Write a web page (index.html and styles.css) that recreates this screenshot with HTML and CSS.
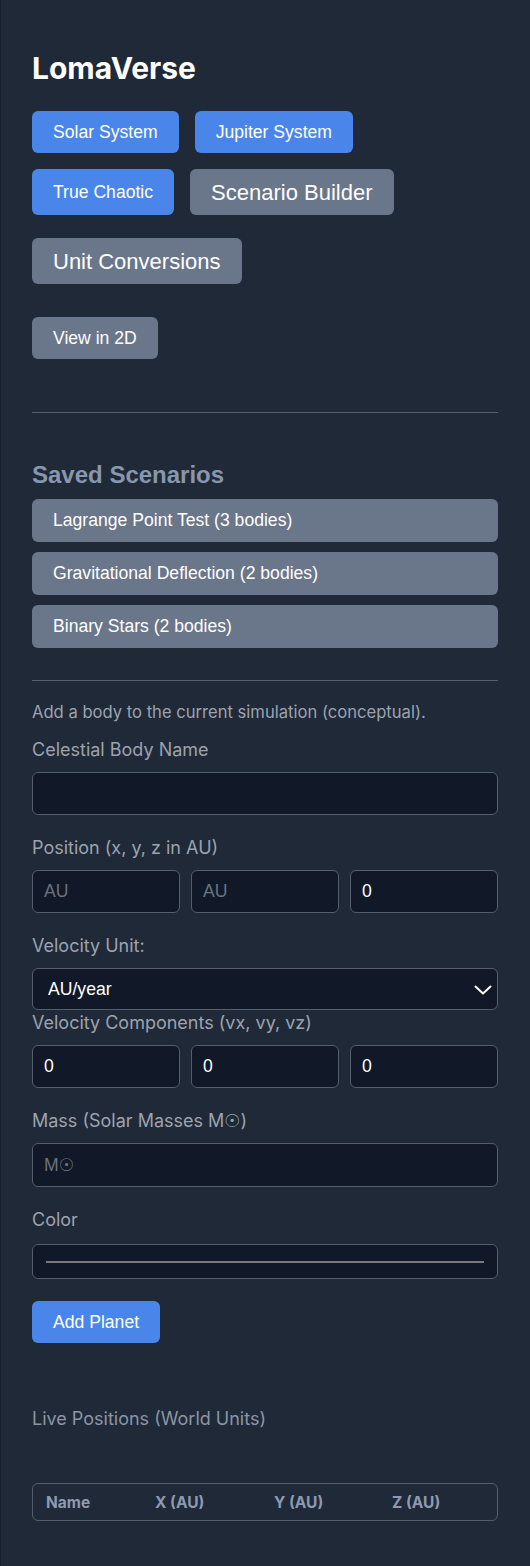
FILE: index.html
```html
<!DOCTYPE html>
<html lang="en">
<head>
<meta charset="utf-8">
<title>LomaVerse</title>
<link rel="stylesheet" href="styles.css">
</head>
<body>
<aside class="panel">
  <h1 class="title">LomaVerse</h1>

  <div class="btn-row">
    <button class="btn btn-blue">Solar System</button>
    <button class="btn btn-blue">Jupiter System</button>
    <button class="btn btn-blue">True Chaotic</button>
    <button class="btn btn-gray btn-lg">Scenario Builder</button>
  </div>
  <div class="btn-single">
    <button class="btn btn-gray btn-lg">Unit Conversions</button>
  </div>
  <div class="btn-single btn-view">
    <button class="btn btn-gray">View in 2D</button>
  </div>

  <div class="divider divider-top"></div>

  <h2 class="section-title">Saved Scenarios</h2>
  <div class="scenario-list">
    <button class="scenario">Lagrange Point Test (3 bodies)</button>
    <button class="scenario">Gravitational Deflection (2 bodies)</button>
    <button class="scenario">Binary Stars (2 bodies)</button>
  </div>

  <div class="divider divider-mid"></div>

  <p class="help">Add a body to the current simulation (conceptual).</p>

  <div class="group">
    <label class="label">Celestial Body Name</label>
    <input class="field" type="text">
  </div>

  <div class="group">
    <label class="label">Position (x, y, z in AU)</label>
    <div class="triple">
      <input class="field" type="text" placeholder="AU">
      <input class="field" type="text" placeholder="AU">
      <input class="field" type="text" value="0">
    </div>
  </div>

  <div class="group group-tight">
    <label class="label">Velocity Unit:</label>
    <div class="select-wrap">
      <select class="field select">
        <option>AU/year</option>
      </select>
      <svg class="chevron" width="18" height="10" viewBox="0 0 18 10"><path d="M1.5 1.5 L9 8.5 L16.5 1.5" fill="none" stroke="#ffffff" stroke-width="2" stroke-linecap="round" stroke-linejoin="round"/></svg>
    </div>
  </div>

  <div class="group">
    <label class="label">Velocity Components (vx, vy, vz)</label>
    <div class="triple">
      <input class="field" type="text" value="0">
      <input class="field" type="text" value="0">
      <input class="field" type="text" value="0">
    </div>
  </div>

  <div class="group">
    <label class="label">Mass (Solar Masses M☉)</label>
    <input class="field field-mass" type="text" placeholder="M☉">
  </div>

  <div class="group">
    <label class="label label-color">Color</label>
    <div class="color-field"><span class="swatch"></span></div>
  </div>

  <button class="btn btn-blue">Add Planet</button>

  <h3 class="live-title">Live Positions (World Units)</h3>

  <div class="table">
    <span class="th">Name</span>
    <span class="th">X (AU)</span>
    <span class="th">Y (AU)</span>
    <span class="th">Z (AU)</span>
  </div>
</aside>
</body>
</html>
```
FILE: styles.css
```css
html, body {
  margin: 0;
  padding: 0;
  background: #1f2937;
}

body {
  font-family: "Liberation Sans", Arial, sans-serif;
  color: #ffffff;
}

.panel {
  box-sizing: border-box;
  width: 530px;
  min-height: 1566px;
  padding: 50px 32px 40px 31px;
  background: #1f2937;
  border-left: 1px solid #172030;
}

.title {
  margin: 0 0 25px 0;
  font-family: Inter, "Liberation Sans", sans-serif;
  font-weight: 700;
  font-size: 30px;
  line-height: 36px;
  color: #ffffff;
}

.btn-row {
  display: flex;
  flex-wrap: wrap;
  gap: 16px;
  width: 400px;
}

.btn {
  font-family: "Liberation Sans", Arial, sans-serif;
  font-size: 17.6px;
  line-height: 20px;
  color: #ffffff;
  border: none;
  border-radius: 6px;
  padding: 11px 21px;
  margin: 0;
  cursor: pointer;
}

.btn-lg {
  font-size: 22px;
  line-height: 24px;
  padding: 12px 21px 10px 21px;
}

.btn-blue {
  background: #4a86ea;
}

.btn-gray {
  background: #6a768a;
}

.btn-single {
  margin-top: 23px;
}

.btn-view {
  margin-top: 33px;
}

.divider {
  height: 1px;
  background: #556070;
}

.divider-top {
  margin-top: 53px;
}

.section-title {
  margin: 48px 0 10px 0;
  font-family: "Liberation Sans", Arial, sans-serif;
  font-weight: 700;
  font-size: 24px;
  line-height: 28px;
  color: #8897ae;
}

.scenario-list {
  display: flex;
  flex-direction: column;
  gap: 10px;
}

.scenario {
  box-sizing: border-box;
  height: 43px;
  width: 100%;
  text-align: left;
  font-family: "Liberation Sans", Arial, sans-serif;
  font-size: 17.6px;
  color: #ffffff;
  background: #6a768a;
  border: none;
  border-radius: 6px;
  padding: 0 21px;
  margin: 0;
}

.divider-mid {
  margin-top: 32px;
}

.help {
  margin: 20px 0 16px 0;
  font-family: Inter, "Liberation Sans", sans-serif;
  font-size: 16.6px;
  line-height: 22px;
  color: #9ca3af;
}

.group {
  margin-bottom: 22px;
}

.group-tight {
  margin-bottom: 2px;
}

.label {
  display: block;
  margin-bottom: 11px;
  font-family: Inter, "Liberation Sans", "DejaVu Sans", sans-serif;
  font-size: 18px;
  line-height: 22px;
  color: #9ca3af;
}

.label-color {
  margin-bottom: 13px;
}

.field {
  display: block;
  box-sizing: border-box;
  width: 100%;
  height: 43px;
  margin: 0;
  padding: 0 11px;
  font-family: "Liberation Sans", Arial, "DejaVu Sans", sans-serif;
  font-size: 17.6px;
  color: #ffffff;
  background: #111827;
  border: 1px solid #545e6d;
  border-radius: 6px;
  outline: none;
}

.field::placeholder {
  color: #6b7280;
}

.field-mass {
  height: 44px;
}

.triple {
  display: grid;
  grid-template-columns: 1fr 1fr 1fr;
  gap: 11px;
}

.select-wrap {
  position: relative;
}

.select {
  appearance: none;
  -webkit-appearance: none;
  height: 42px;
  padding: 0 15px;
}

.chevron {
  position: absolute;
  right: 6px;
  top: 17px;
}

.color-field {
  box-sizing: border-box;
  height: 35px;
  display: flex;
  align-items: center;
  padding: 0 13px;
  background: #111827;
  border: 1px solid #545e6d;
  border-radius: 6px;
}

.swatch {
  display: block;
  flex: 1;
  height: 2px;
  background: #7a7a7a;
}

.live-title {
  margin: 65px 0 53px 0;
  font-family: Inter, "Liberation Sans", sans-serif;
  font-weight: 400;
  font-size: 18px;
  line-height: 22px;
  color: #8b95a7;
}

.table {
  box-sizing: border-box;
  height: 38px;
  display: grid;
  grid-template-columns: 109px 119px 118px 1fr;
  align-items: center;
  padding-left: 13px;
  border: 1px solid #545e6d;
  border-radius: 6px;
}

.th {
  font-family: Inter, "Liberation Sans", sans-serif;
  font-weight: 700;
  font-size: 15.5px;
  color: #8e9ab0;
}
```
